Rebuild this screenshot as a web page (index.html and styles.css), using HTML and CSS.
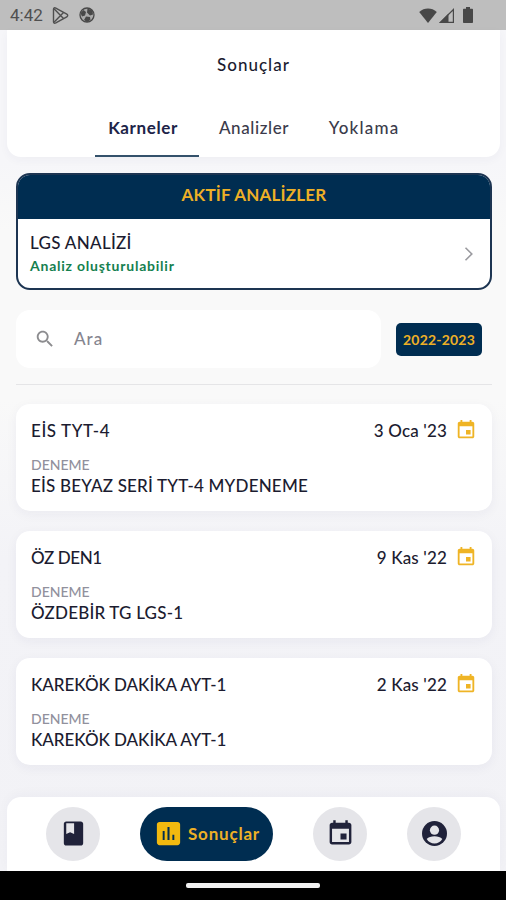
FILE: index.html
```html
<!DOCTYPE html>
<html lang="tr">
<head>
  <meta charset="UTF-8">
  <meta name="viewport" content="width=device-width, initial-scale=1.0">
  <title>Sonuçlar</title>
  <link rel="stylesheet" href="styles.css">
</head>
<body>
  <svg class="symbols" width="0" height="0">
    <symbol id="event" viewBox="0 0 24 24">
      <path d="M17 12h-5v5h5v-5zM16 1v2H8V1H6v2H5c-1.110 0-1.990.9-1.990 2L3 19c0 1.100.89 2 2 2h14c1.100 0 2-.9 2-2V5c0-1.100-.9-2-2-2h-1V1h-2zm3 18H5V8h14v11z"/>
    </symbol>
  </svg>

  <div class="status-bar">
    <span class="time">4:42</span>
    <svg class="status-play" width="17" height="17" viewBox="0 0 17 17" fill="none" stroke="#505050" stroke-width="1.4" stroke-linejoin="round">
      <path d="M1.500 2.200C1.500.8 2.600.5 3.800 1.100L14.800 7.200c1.200.7 1.200 1.900 0 2.600L3.800 15.900c-1.200.6-2.300.3-2.300-1.100z"/>
      <path d="M2 1.800l9.500 9.600M2 15.200l9.500-9.600"/>
    </svg>
    <svg class="status-ball" width="16" height="16" viewBox="0 0 16 16">
      <circle cx="8" cy="8" r="7" fill="#aaa" stroke="#484848" stroke-width="1.3"/>
      <path fill="#484848" d="M8.500 1.500l5 2 .5 4-3 1-3-3zM1.500 6l3-3 2.500 2-1 3.500-3 1zM7 9.500l4 .5.500 3-3.500 2-3-2z"/>
    </svg>
    <svg class="status-wifi" width="18" height="15" viewBox="0 0 18 15" fill="#484848">
      <path d="M9 15L.2 4C2.800 1.600 5.800.5 9 .5s6.200 1.100 8.800 3.500z"/>
    </svg>
    <svg class="status-signal" width="15" height="15" viewBox="0 0 15 15">
      <path fill="#484848" d="M0 15L9.500 5.500V15z"/>
      <path fill="none" stroke="#484848" stroke-width="1.2" d="M1.500 14.400L14.400 1.500v12.900z"/>
    </svg>
    <svg class="status-battery" width="10" height="16" viewBox="0 0 10 16" fill="#484848">
      <path d="M3 0h4v1.700h2c.6 0 1 .4 1 1V15c0 .6-.4 1-1 1H1c-.6 0-1-.4-1-1V2.700c0-.6.4-1 1-1h2z"/>
    </svg>
  </div>

  <header class="header">
    <div class="title">Sonuçlar</div>
    <nav class="tabs">
      <a class="tab active">Karneler</a>
      <a class="tab">Analizler</a>
      <a class="tab yoklama">Yoklama</a>
    </nav>
  </header>

  <main class="content">
    <section class="analysis">
      <div class="analysis-head">AKTİF ANALİZLER</div>
      <div class="analysis-body">
        <div>
          <div class="analysis-name">LGS ANALİZİ</div>
          <div class="analysis-status">Analiz oluşturulabilir</div>
        </div>
        <svg width="10" height="16" viewBox="0 0 10 16" fill="none" stroke="#9a9a9f" stroke-width="1.6">
          <path d="M1.500 1.800L7.800 8l-6.300 6.200"/>
        </svg>
      </div>
    </section>

    <div class="search-row">
      <div class="search">
        <svg width="22" height="22" viewBox="0 0 24 24" fill="#8c8c8f">
          <path d="M15.500 14h-.79l-.28-.27C15.410 12.590 16 11.110 16 9.500 16 5.910 13.090 3 9.500 3S3 5.910 3 9.500 5.910 16 9.500 16c1.610 0 3.090-.59 4.230-1.570l.27.28v.79l5 4.990L20.490 19l-4.990-5zm-6 0C7.010 14 5 11.990 5 9.500S7.010 5 9.500 5 14 7.010 14 9.500 11.990 14 9.500 14z"/>
        </svg>
        <span class="placeholder">Ara</span>
      </div>
      <div class="year">2022-2023</div>
    </div>

    <div class="results">
      <article class="card">
        <div class="card-top">
          <span class="card-name eis">EİS TYT-4</span>
          <span class="date">3 Oca '23</span>
          <svg class="card-icon"><use href="#event"/></svg>
        </div>
        <div class="label">DENEME</div>
        <div class="card-desc">EİS BEYAZ SERİ TYT-4 MYDENEME</div>
      </article>
      <article class="card">
        <div class="card-top">
          <span class="card-name oz">ÖZ DEN1</span>
          <span class="date">9 Kas '22</span>
          <svg class="card-icon"><use href="#event"/></svg>
        </div>
        <div class="label">DENEME</div>
        <div class="card-desc">ÖZDEBİR TG LGS-1</div>
      </article>
      <article class="card">
        <div class="card-top">
          <span class="card-name karekok">KAREKÖK DAKİKA AYT-1</span>
          <span class="date">2 Kas '22</span>
          <svg class="card-icon"><use href="#event"/></svg>
        </div>
        <div class="label">DENEME</div>
        <div class="card-desc karekok">KAREKÖK DAKİKA AYT-1</div>
      </article>
    </div>
  </main>

  <footer class="bottom-nav">
    <a class="nav-item">
      <svg width="29" height="29" viewBox="0 0 24 24">
        <path d="M18 2H6c-1.100 0-2 .9-2 2v16c0 1.100.9 2 2 2h12c1.100 0 2-.9 2-2V4c0-1.100-.9-2-2-2zM6 3.500h6.500v9L9.200 11 6 12.500v-9z"/>
      </svg>
    </a>
    <a class="nav-item selected">
      <svg width="31" height="31" viewBox="0 0 24 24">
        <path d="M19 3H5c-1.100 0-2 .9-2 2v14c0 1.100.9 2 2 2h14c1.100 0 2-.9 2-2V5c0-1.100-.9-2-2-2zM9 17H7.500v-7H9v7zm3.800 0h-1.600V7h1.600v10zm3.700 0H15v-4h1.500v4z"/>
      </svg>
      <span>Sonuçlar</span>
    </a>
    <a class="nav-item">
      <svg width="29" height="29"><use href="#event"/></svg>
    </a>
    <a class="nav-item">
      <svg width="25" height="25" viewBox="0 0 24 24">
        <circle cx="12" cy="12" r="12"/>
        <circle class="face" cx="12" cy="8.800" r="4.400"/>
        <path class="face" d="M4.500 17.200c1.600-1.700 4.400-2.600 7.500-2.600s5.900.9 7.500 2.600c-1.600 2.700-4.400 4.300-7.500 4.300s-5.900-1.600-7.500-4.300z"/>
      </svg>
    </a>
  </footer>
  <div class="gesture-bar"><div class="handle"></div></div>
</body>
</html>
```

FILE: styles.css
```css
* {
  box-sizing: border-box;
}

body {
  margin: 0;
  height: 900px;
  display: flex;
  flex-direction: column;
  overflow: hidden;
  background: linear-gradient(#f6f6f9 160px, #f9f9f9 230px, #f9f9f9 400px, #f3f3f7 560px, #f2f2f6);
  font-family: Lato, "Open Sans", sans-serif;
  font-weight: 500;
  color: #1c1c30;
}

.symbols {
  display: none;
}

/* Status bar */
.status-bar {
  height: 30px;
  flex-shrink: 0;
  display: flex;
  align-items: center;
  padding: 0 33px 0 10px;
  background-color: #bebebe;
}

.time {
  width: 42px;
  font-family: Roboto, sans-serif;
  font-size: 17px;
  font-weight: 400;
  color: #505050;
}

.status-ball {
  margin-left: 10px;
}

.status-wifi {
  margin-left: auto;
}

.status-signal {
  margin: 0 9px 0 2px;
}

/* Header */
.header {
  height: 127px;
  flex-shrink: 0;
  margin: 0 6px 0 7px;
  background-color: #fff;
  border-radius: 0 0 14px 14px;
  box-shadow: 0 3px 10px rgba(40, 40, 90, 0.04);
}

.title {
  height: 69px;
  display: flex;
  align-items: center;
  justify-content: center;
  font-size: 17px;
  letter-spacing: 1px;
}

.tabs {
  height: 58px;
  display: flex;
  justify-content: center;
  padding-left: 4px;
}

.tab {
  width: 104px;
  margin-right: 6px;
  text-align: center;
  font-size: 17px;
  line-height: 57px;
  letter-spacing: 0.6px;
  color: #3b3b4b;
}

.tab.yoklama {
  margin-right: 0;
  letter-spacing: 1.2px;
}

.tab.active {
  margin-right: 3px;
  padding-right: 8px;
  font-weight: 700;
  color: #202448;
  border-bottom: 2px solid #34516b;
}

/* Content */
.content {
  flex: 1;
  padding: 16px 14px 0 16px;
}

.analysis {
  height: 117px;
  border: 2px solid #1d3552;
  border-radius: 14px;
  overflow: hidden;
  background-color: #fff;
}

.analysis-head {
  height: 44px;
  line-height: 40px;
  text-align: center;
  background-color: #002d51;
  color: #eeb026;
  font-size: 17px;
  font-weight: 700;
  letter-spacing: 0.2px;
}

.analysis-body {
  height: 69px;
  display: flex;
  align-items: center;
  justify-content: space-between;
  padding: 0 16px 0 12px;
}

.analysis-name {
  font-size: 17px;
  line-height: 24px;
  letter-spacing: 0.3px;
}

.analysis-status {
  font-size: 14px;
  font-weight: 700;
  line-height: 22px;
  letter-spacing: 0.77px;
  color: #14804f;
}

.search-row {
  display: flex;
  align-items: center;
  gap: 15px;
  margin-top: 20px;
  padding-bottom: 16px;
  border-bottom: 1px solid #e5e5e7;
}

.search {
  width: 365px;
  height: 58px;
  display: flex;
  align-items: center;
  padding-left: 18px;
  gap: 18px;
  background-color: #fff;
  border-radius: 14px;
  font-size: 17px;
  letter-spacing: 1px;
  color: #85858f;
}

.placeholder {
  padding-bottom: 2px;
}

.year {
  width: 86px;
  height: 33px;
  border-radius: 5px;
  background-color: #002d51;
  color: #eeb026;
  font-size: 14px;
  font-weight: 700;
  line-height: 33px;
  letter-spacing: 0.2px;
  text-align: center;
}

/* Result cards */
.results {
  display: flex;
  flex-direction: column;
  gap: 20px;
  margin-top: 19px;
}

.card {
  height: 107px;
  padding: 14px 15px 0;
  background-color: #fff;
  border-radius: 14px;
  box-shadow: 0 3px 12px rgba(40, 40, 90, 0.05);
}

.card-top {
  height: 24px;
  display: flex;
  align-items: center;
}

.card-name {
  font-size: 17px;
}

.card-name.eis {
  letter-spacing: 0.6px;
}

.card-name.oz {
  letter-spacing: -0.4px;
}

.date {
  margin-left: auto;
  font-size: 17px;
  letter-spacing: 0.15px;
}

.card-icon {
  width: 22px;
  height: 22px;
  margin-left: 8px;
  fill: #efb425;
}

.label {
  margin-top: 13px;
  font-size: 14px;
  line-height: 20px;
  color: #91919d;
}

.card-desc {
  font-size: 17px;
  line-height: 22px;
  letter-spacing: 0.2px;
}

.card-name.karekok,
.card-desc.karekok {
  letter-spacing: -0.05px;
}

/* Bottom navigation */
.bottom-nav {
  height: 74px;
  flex-shrink: 0;
  display: flex;
  align-items: center;
  justify-content: space-between;
  margin: 0 6px 0 7px;
  padding: 0 39px 1px;
  background-color: #fff;
  border-radius: 14px 14px 0 0;
  box-shadow: 0 -3px 12px rgba(40, 40, 90, 0.03);
}

.nav-item {
  width: 54px;
  height: 54px;
  display: flex;
  align-items: center;
  justify-content: center;
  border-radius: 27px;
  background-color: #e5e5e9;
  fill: #20223a;
}

.nav-item .face {
  fill: #e5e5e9;
}

.nav-item.selected {
  width: 133px;
  gap: 4px;
  background-color: #002d51;
  color: #eeb026;
  fill: #f2b90f;
  font-size: 17px;
  font-weight: 700;
  letter-spacing: 0.8px;
}

.gesture-bar {
  height: 29px;
  flex-shrink: 0;
  display: flex;
  justify-content: center;
  padding-top: 12px;
  background-color: #000;
}

.handle {
  width: 134px;
  height: 5px;
  border-radius: 2px;
  background-color: #f1f1f1;
}
```
